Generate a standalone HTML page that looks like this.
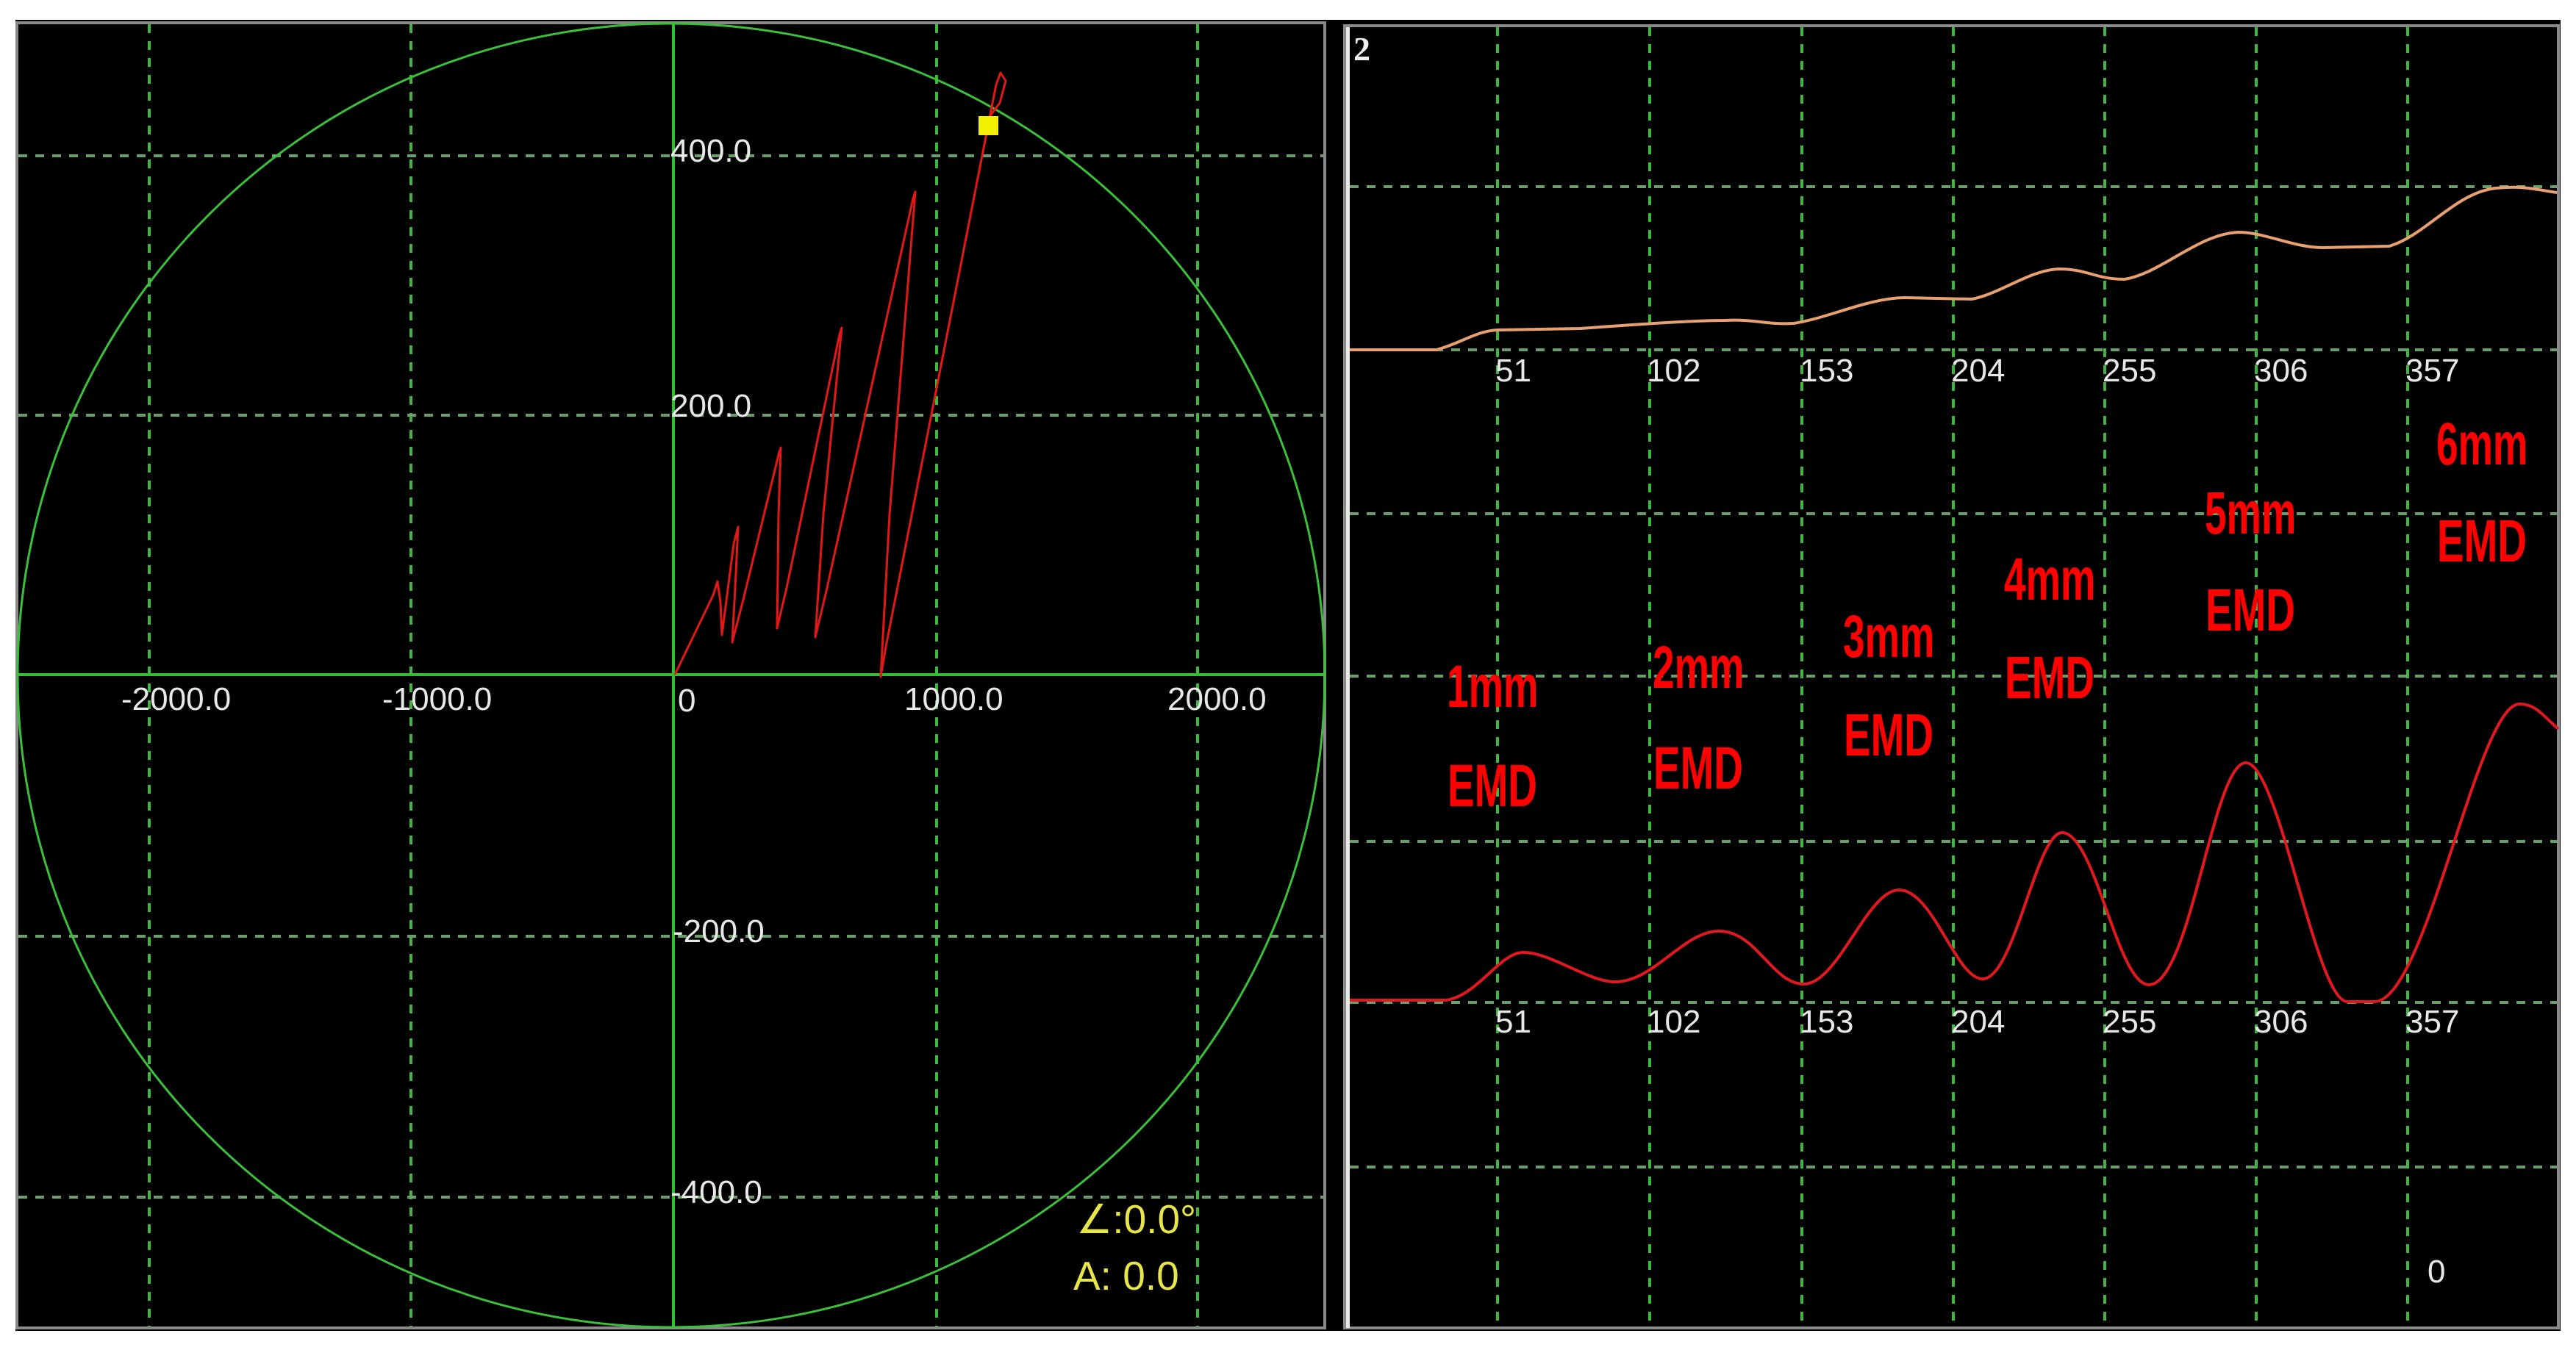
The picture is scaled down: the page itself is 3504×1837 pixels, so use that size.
<!DOCTYPE html>
<html><head><meta charset="utf-8"><style>
html,body{margin:0;padding:0;background:#fff;width:3504px;height:1837px;overflow:hidden}
svg{display:block}
.ax{font-family:"Liberation Sans",sans-serif;font-size:44px;fill:#e8e8e8}
.em{font-family:"Liberation Sans",sans-serif;font-weight:bold;font-size:82px;fill:#ff0000}
</style></head><body>
<svg width="3504" height="1837" viewBox="0 0 3504 1837" xmlns="http://www.w3.org/2000/svg">
<rect x="0" y="0" width="3504" height="1837" fill="#fff"/>
<rect x="21" y="27" width="3462" height="1784" fill="#000"/>
<!-- left panel -->
<rect x="23" y="31" width="1779" height="1776" fill="none" stroke="#8a8a8a" stroke-width="4"/>
<g stroke="#3cb83c" stroke-width="4" stroke-dasharray="12 11" fill="none">
<path d="M203 33V1805M559 33V1805M1274 33V1805M1629 33V1805"/>
</g>
<g stroke="#6a9e6a" stroke-width="4" stroke-dasharray="12 11" fill="none">
<path d="M25 212H1800M25 565H1800M25 1274H1800M25 1629H1800"/>
</g>
<path d="M916 31V1806M25 918H1800" stroke="#2ec02e" stroke-width="4"/>
<ellipse cx="913" cy="919" rx="889" ry="887" fill="none" stroke="#3cc03c" stroke-width="3"/>
<polyline fill="none" stroke="#e01818" stroke-width="3" stroke-linejoin="round" points="918,918 970,810 976,791 980,820 982,864 998,740 1004,717 1000,800 996,874 1010,820 1060,615 1062,609 1059,700 1057,855 1070,800 1142,455 1145,446 1120,700 1109,867 1125,800 1242,270 1245,261 1210,700 1198,921 1205,880 1355,115 1361,99 1368,110 1360,140 1345,160"/>
<rect x="1331" y="158" width="27" height="26" fill="#f0f000"/>
<g class="ax">
<text x="912" y="220">400.0</text>
<text x="912" y="567">200.0</text>
<text x="915" y="1282">-200.0</text>
<text x="912" y="1637">-400.0</text>
<text x="165" y="966">-2000.0</text>
<text x="520" y="966">-1000.0</text>
<text x="922" y="968">0</text>
<text x="1230" y="966">1000.0</text>
<text x="1588" y="966">2000.0</text>
</g>
<g font-family="Liberation Sans,DejaVu Sans,sans-serif" font-size="55" fill="#e6e64a">
<text x="1464" y="1678">∠:0.0°</text>
<text x="1460" y="1755">A: 0.0</text>
</g>
<!-- right panel -->
<rect x="1829" y="35" width="1651" height="1772" fill="none" stroke="#8a8a8a" stroke-width="4"/>
<g stroke="#3cb83c" stroke-width="4" stroke-dasharray="12 11" fill="none">
<path d="M2037 37V1805M2244 37V1805M2451 37V1805M2657 37V1805M2863 37V1805M3069 37V1805M3275 37V1805"/>
</g>
<g stroke="#6a9e6a" stroke-width="4" stroke-dasharray="12 11" fill="none">
<path d="M1836 254H3478M1836 476H3478M1836 699H3478M1836 920H3478M1836 1145H3478M1836 1364H3478M1836 1588H3478"/>
</g>
<rect x="1831" y="37" width="5" height="1770" fill="#e8e8e8"/>
<text x="1841" y="82" font-family="Liberation Serif,serif" font-weight="bold" font-size="46" fill="#eee">2</text>
<path fill="none" stroke="#e8a070" stroke-width="4" d="M1836,476 L1954,476 C1990,466 2010,449 2040,449 L2150,447 C2220,442 2300,436 2346,436 C2390,434 2400,442 2440,440 C2490,432 2540,406 2590,405 L2682,407 C2720,400 2760,368 2800,366 C2840,366 2850,380 2890,380 C2940,372 2990,318 3045,316 C3080,316 3120,337 3160,337 L3250,335 C3300,320 3340,262 3395,256 C3430,252 3450,258 3478,262"/>
<path fill="none" stroke="#e01820" stroke-width="4" d="M1836,1361 L1967,1361 C2010,1355 2040,1296 2072,1296 C2110,1296 2160,1336 2197,1336 C2250,1336 2290,1267 2338,1267 C2390,1267 2410,1339 2454,1339 C2500,1339 2540,1211 2583,1211 C2630,1211 2660,1332 2697,1332 C2740,1332 2770,1133 2805,1133 C2850,1133 2880,1340 2923,1340 C2980,1340 3010,1038 3055,1038 C3100,1038 3150,1363 3193,1363 L3230,1363 C3300,1363 3370,958 3427,958 C3450,958 3460,975 3480,992"/>
<g class="ax" font-size="43">
<text x="2034" y="519">51</text><text x="2240" y="519">102</text><text x="2448" y="519">153</text><text x="2654" y="519">204</text><text x="2860" y="519">255</text><text x="3066" y="519">306</text><text x="3272" y="519">357</text>
<text x="2034" y="1405">51</text><text x="2240" y="1405">102</text><text x="2448" y="1405">153</text><text x="2654" y="1405">204</text><text x="2860" y="1405">255</text><text x="3066" y="1405">306</text><text x="3272" y="1405">357</text>
<text x="3302" y="1745">0</text>
</g>
<g class="em">
<text transform="translate(1968 962) scale(0.65 1)">1mm</text>
<text transform="translate(1969 1097) scale(0.67 1)">EMD</text>
<text transform="translate(2248 936) scale(0.65 1)">2mm</text>
<text transform="translate(2249 1073) scale(0.67 1)">EMD</text>
<text transform="translate(2507 894) scale(0.65 1)">3mm</text>
<text transform="translate(2508 1028) scale(0.67 1)">EMD</text>
<text transform="translate(2726 816) scale(0.65 1)">4mm</text>
<text transform="translate(2727 950) scale(0.67 1)">EMD</text>
<text transform="translate(2999 726) scale(0.65 1)">5mm</text>
<text transform="translate(3000 858) scale(0.67 1)">EMD</text>
<text transform="translate(3314 632) scale(0.65 1)">6mm</text>
<text transform="translate(3315 764) scale(0.67 1)">EMD</text>
</g>
</svg>
</body></html>
